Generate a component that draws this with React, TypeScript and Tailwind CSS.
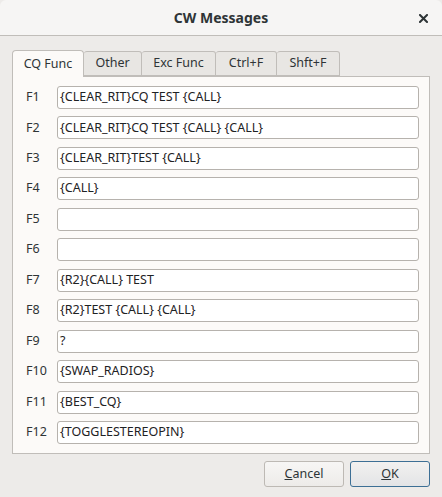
import React from 'react'

const tabs = [
  { label: 'CQ Func', w: 'w-[72px]' },
  { label: 'Other', w: 'w-[58px]' },
  { label: 'Exc Func', w: 'w-[74px]' },
  { label: 'Ctrl+F', w: 'w-[61px]' },
  { label: 'Shft+F', w: 'w-[63px]' },
]

const rows = [
  ['F1', '{CLEAR_RIT}CQ TEST {CALL}'],
  ['F2', '{CLEAR_RIT}CQ TEST {CALL} {CALL}'],
  ['F3', '{CLEAR_RIT}TEST {CALL}'],
  ['F4', '{CALL}'],
  ['F5', ''],
  ['F6', ''],
  ['F7', '{R2}{CALL} TEST'],
  ['F8', '{R2}TEST {CALL} {CALL}'],
  ['F9', '?'],
  ['F10', '{SWAP_RADIOS}'],
  ['F11', '{BEST_CQ}'],
  ['F12', '{TOGGLESTEREOPIN}'],
]

export default function App() {
  return (
    <div
      className="w-[442px] h-[497px] bg-[#edebe9] flex flex-col text-[#2e3436] overflow-hidden"
      style={{ fontFamily: '"Noto Sans", "DejaVu Sans", sans-serif' }}
    >
      {/* title bar */}
      <div className="h-[36px] shrink-0 flex items-center justify-center relative bg-[#f6f5f4] border-b border-[#c0bdb9] rounded-t-[6px]">
        <span className="text-[14px] font-bold text-[#2e3436]">CW Messages</span>
        <svg className="absolute right-[14px] top-[14px]" width="9" height="9" viewBox="0 0 9 9">
          <path d="M1 1 L8 8 M8 1 L1 8" stroke="#2e3436" strokeWidth="2" strokeLinecap="square" />
        </svg>
      </div>

      <div className="px-[12px] pt-[13px]">
        {/* tabs */}
        <div className="flex items-end h-[27px]">
          {tabs.map((t, i) =>
            i === 0 ? (
              <div
                key={t.label}
                className={`${t.w} h-[27px] flex items-center justify-center bg-[#fcfaf8] border border-b-0 border-[#c0bdb9] rounded-t-[4px] text-[12.5px] relative top-[1px] z-10`}
              >
                {t.label}
              </div>
            ) : (
              <div
                key={t.label}
                className={`${t.w} h-[25px] flex items-center justify-center bg-[#e8e6e3] border border-l-0 border-[#c0bdb9] rounded-t-[3px] text-[12.5px]`}
              >
                {t.label}
              </div>
            )
          )}
        </div>

        {/* panel */}
        <div className="h-[378px] bg-[#fcfaf8] border border-[#c0bdb9] pt-[9px] pb-[9px] pl-[13px] pr-[10px] flex flex-col justify-between">
          {rows.map(([k, v]) => (
            <div key={k} className="flex items-center h-[23px]">
              <span className="w-[31px] text-[12.5px]">{k}</span>
              <div className="flex-1 h-[23px] bg-white border border-[#b6b2ad] rounded-[3px] flex items-center px-[2px] text-[12.5px] text-[#1e2224]">
                {v}
              </div>
            </div>
          ))}
        </div>

        {/* buttons */}
        <div className="flex justify-end gap-[6px] mt-[7px]">
          <div className="w-[80px] h-[26px] flex items-center justify-center border border-[#bdb9b4] rounded-[3px] bg-gradient-to-b from-[#f7f6f5] to-[#edebe9] text-[12.5px]">
            <span><span className="underline">C</span>ancel</span>
          </div>
          <div className="w-[80px] h-[26px] flex items-center justify-center border border-[#3d6f95] rounded-[3px] bg-gradient-to-b from-[#f2f1f0] to-[#e3e4e6] text-[12.5px]">
            <span><span className="underline">O</span>K</span>
          </div>
        </div>
      </div>
    </div>
  )
}
